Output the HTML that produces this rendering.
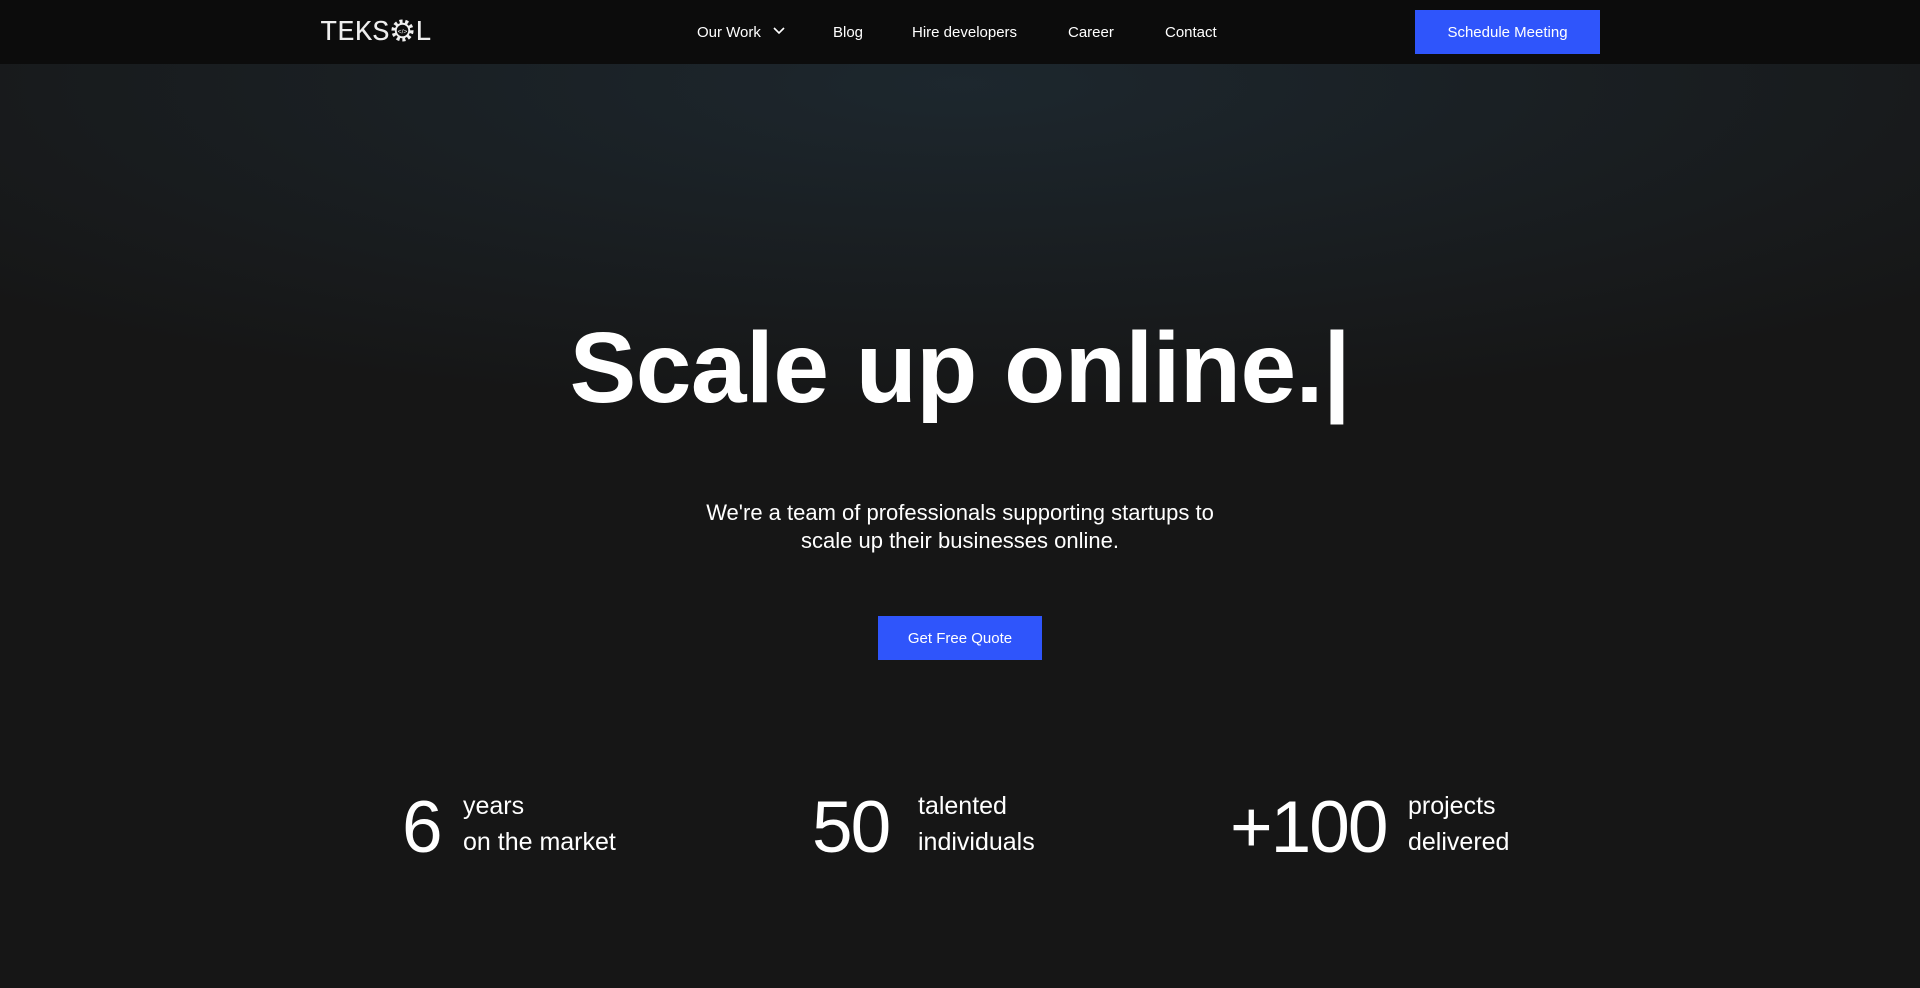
<!DOCTYPE html>
<html><head><meta charset="utf-8"><style>
*{margin:0;padding:0;box-sizing:border-box}
body{width:1920px;height:988px;overflow:hidden;background:#161616;font-family:"Liberation Sans",sans-serif;color:#fff;position:relative}
.bg{position:absolute;left:0;top:64px;width:1920px;height:500px;background:radial-gradient(ellipse 1300px 330px at 960px 20px,rgba(30,42,50,0.85),rgba(22,22,22,0) 100%)}
nav{position:absolute;left:0;top:0;width:1920px;height:64px;background:#0c0c0c}
.logo{position:absolute;left:320px;top:16px;font-family:"Liberation Mono",monospace;font-size:29px;letter-spacing:0px;color:#eee}
.nav a{position:absolute;top:24px;font-size:15px;color:#fff;text-decoration:none}
.btn{position:absolute;background:#2f55fb;color:#fff;font-size:15px;display:flex;align-items:center;justify-content:center}
h1{position:absolute;left:0;width:1920px;text-align:center;top:311px;font-size:100px;font-weight:bold;letter-spacing:-0.5px}
p.sub{position:absolute;left:0;width:1920px;text-align:center;top:499px;font-size:22px;line-height:28px}
.num{position:absolute;top:785px;font-size:73px;line-height:86px;letter-spacing:-2px}
.lbl{position:absolute;top:788px;font-size:25px;line-height:36px}
</style></head><body>
<div class="bg"></div>
<nav>
<div class="logo">TEKS<span style="display:inline-block;width:25px;height:25px;vertical-align:-3px;position:relative"><svg width="25" height="25" viewBox="0 0 26 26"><circle cx="13" cy="13" r="9" fill="none" stroke="#eee" stroke-width="5" stroke-dasharray="3 2.6"/><circle cx="13" cy="13" r="7" fill="none" stroke="#eee" stroke-width="2"/><text x="13" y="16" font-size="7" text-anchor="middle" fill="#eee" font-family="Liberation Sans">&lt;/&gt;</text></svg></span>L</div>
<div class="nav">
<a style="left:697px">Our Work <svg width="12" height="8" viewBox="0 0 12 8" style="margin-left:8px;vertical-align:2px"><path d="M1 1l5 5 5-5" fill="none" stroke="#fff" stroke-width="1.6"/></svg></a>
<a style="left:833px">Blog</a>
<a style="left:912px">Hire developers</a>
<a style="left:1068px">Career</a>
<a style="left:1165px">Contact</a>
</div>
<div class="btn" style="left:1415px;top:10px;width:185px;height:44px">Schedule Meeting</div>
</nav>
<h1>Scale up online.|</h1>
<p class="sub">We're a team of professionals supporting startups to<br>scale up their businesses online.</p>
<div class="btn" style="left:878px;top:616px;width:164px;height:44px;font-size:15px">Get Free Quote</div>
<div class="num" style="left:402px">6</div>
<div class="lbl" style="left:463px">years<br>on the market</div>
<div class="num" style="left:812px">50</div>
<div class="lbl" style="left:918px">talented<br>individuals</div>
<div class="num" style="left:1230px">+100</div>
<div class="lbl" style="left:1408px">projects<br>delivered</div>
</body></html>
